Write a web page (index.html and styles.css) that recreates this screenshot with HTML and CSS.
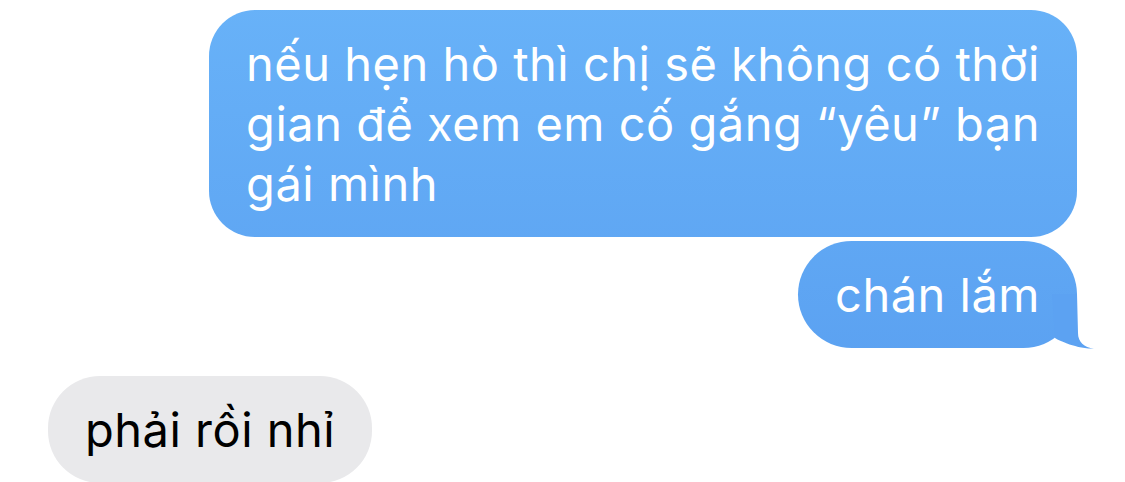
FILE: index.html
```html
<!DOCTYPE html>
<html>
<head>
    <title>Messages</title>
    <meta name="viewport" content="width=device-width, initial-scale=1.0">
    <link rel="stylesheet" href="styles.css">
</head>
<body>
    <div class="thread">
        <div class="row row-out">
            <div class="bubble bubble-out">nếu hẹn hò thì chị sẽ không có thời<br>gian để xem em cố gắng “yêu” bạn<br>gái mình</div>
        </div>
        <div class="row row-out">
            <div class="bubble bubble-out has-tail">chán lắm
                <svg class="tail" width="45" height="56" viewBox="0 0 45 56">
                    <path d="M0 0 L25 0 L26 39 C26 48 32 53.5 42 54.5 C32 55 22 52 15 49.5 C10 47.5 6 46 3 44 Z" fill="#5ca2f2"/>
                </svg>
            </div>
        </div>
        <div class="row row-in">
            <div class="bubble bubble-in">phải rồi nhỉ</div>
        </div>
    </div>
</body>
</html>
```

FILE: styles.css
```css
body {
    margin: 0;
    background: #fff;
    font-family: "Inter", "Liberation Sans", sans-serif;
    overflow: hidden;
}

.thread {
    display: flex;
    flex-direction: column;
    padding: 10px 48px 0 48px;
}

.row {
    display: flex;
}

.row-out {
    justify-content: flex-end;
    margin-bottom: 4px;
}

.row-in {
    justify-content: flex-start;
    margin-top: 24px;
}

.bubble {
    position: relative;
    font-size: 47px;
    letter-spacing: 0.5px;
    line-height: 60px;
    padding: 24px 37px 23px 37px;
    white-space: nowrap;
}

.bubble-out {
    color: #fff;
    background: linear-gradient(180deg, #68b2f8 0px, #579cef 482px);
    background-attachment: fixed;
    border-radius: 46px;
}

.has-tail {
    border-radius: 54px;
}

.bubble-in {
    color: #000;
    background: #e9e9eb;
    border-radius: 52px;
}

.tail {
    position: absolute;
    right: -20px;
    bottom: -2px;
}
```
